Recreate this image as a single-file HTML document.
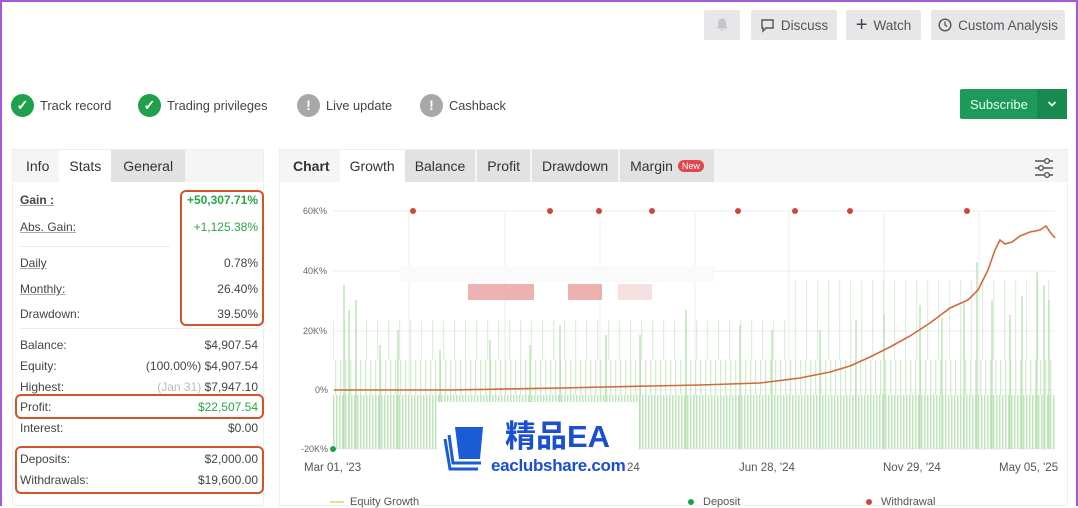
<!DOCTYPE html>
<html><head><meta charset="utf-8"><style>
*{box-sizing:border-box;margin:0;padding:0}
body{width:1078px;height:506px;overflow:hidden;background:#fff;font-family:"Liberation Sans",sans-serif;color:#333;position:relative}
.frame{position:absolute;left:0;top:0;width:1078px;height:506px;border:2px solid #a35ad8;border-bottom:none;pointer-events:none}
.btn{position:absolute;top:10px;height:30px;background:#e6e7e9;border-radius:2px;font-size:13.5px;color:#555;display:flex;align-items:center;justify-content:center;gap:6px}
.badge{position:absolute;top:92px;height:26px;display:flex;align-items:center;font-size:12.8px;color:#444;gap:6px}
.ic{width:23px;height:23px;border-radius:50%;display:flex;align-items:center;justify-content:center;color:#fff;font-weight:bold;font-size:14px}
.g{background:#1fa04a}.gr{background:#a8a8a8}
.panel{position:absolute;background:#fff;border:1px solid #eee}
.tabs{display:flex;height:32px;background:#f5f5f5;font-size:14px}
.tabs div{padding:0 10px;display:flex;align-items:center}
.row{position:absolute;left:20px;display:flex;justify-content:space-between;font-size:12px;color:#444}
.u{text-decoration:underline;text-decoration-color:#aaa}
.box{position:absolute;border:2.5px solid #d2552a;border-radius:6px}
.green{color:#28a745}
.ax{position:absolute;font-size:9px;color:#666}
.dl{position:absolute;top:462px;font-size:11.5px;color:#555}
</style></head><body>
<div class="btn" style="left:704px;width:36px"><svg width="16" height="16" viewBox="0 0 16 16"><path d="M8 1.5c-2.6 0-4 2-4 4.5v3.5l-1.5 2h11l-1.5-2V6c0-2.5-1.4-4.5-4-4.5zM6.5 12.5a1.5 1.5 0 003 0z" fill="#c6c6c8"/></svg></div>
<div class="btn" style="left:751px;width:86px"><svg width="15" height="15" viewBox="0 0 15 15"><path d="M2 2h11v8H6l-3 3v-3H2z" fill="none" stroke="#555" stroke-width="1.4"/></svg>Discuss</div>
<div class="btn" style="left:846px;width:75px"><span style="font-size:20px;color:#444">+</span>Watch</div>
<div class="btn" style="left:931px;width:134px"><svg width="14" height="14" viewBox="0 0 14 14"><circle cx="7" cy="7" r="5.8" fill="none" stroke="#555" stroke-width="1.4"/><path d="M7 3.5V7l2.2 1.5" fill="none" stroke="#555" stroke-width="1.3"/></svg>Custom Analysis</div>

<div class="badge" style="left:11px"><div class="ic g">✓</div>Track record</div>
<div class="badge" style="left:138px"><div class="ic g">✓</div>Trading privileges</div>
<div class="badge" style="left:297px"><div class="ic gr">!</div>Live update</div>
<div class="badge" style="left:420px"><div class="ic gr">!</div>Cashback</div>

<div style="position:absolute;left:960px;top:89px;width:107px;height:30px;background:#1d9a5a;border-radius:2px;color:#e8fff0;font-size:13px;display:flex;align-items:center"><span style="margin-left:10px">Subscribe</span><span style="position:absolute;right:0;top:0;width:30px;height:30px;background:#188a50;display:flex;align-items:center;justify-content:center"><svg width="10" height="8" viewBox="0 0 10 8"><path d="M1.5 2l3.5 3.5L8.5 2" fill="none" stroke="#e8fff0" stroke-width="1.8"/></svg></span></div>

<div class="panel" style="left:12px;top:149px;width:252px;height:357px">
<div class="tabs"><div style="padding-left:13px">Info</div><div style="background:#fff">Stats</div><div style="background:#e2e2e2;padding:0 12px">General</div></div>
</div>
<div class="row" style="top:193px;width:238px"><b class="u">Gain :</b><b class="green">+50,307.71%</b></div>
<div class="row" style="top:220px;width:238px"><span class="u">Abs. Gain:</span><span class="green">+1,125.38%</span></div>
<div style="position:absolute;left:20px;top:246px;width:150px;border-top:1px solid #eee"></div>
<div class="row" style="top:256px;width:238px"><span class="u">Daily</span><span>0.78%</span></div>
<div class="row" style="top:282px;width:238px"><span class="u">Monthly:</span><span>26.40%</span></div>
<div class="row" style="top:307px;width:238px"><span>Drawdown:</span><span>39.50%</span></div>
<div style="position:absolute;left:20px;top:328px;width:238px;border-top:1px solid #eee"></div>
<div class="row" style="top:338px;width:238px"><span>Balance:</span><span>$4,907.54</span></div>
<div class="row" style="top:359px;width:238px"><span>Equity:</span><span>(100.00%) $4,907.54</span></div>
<div class="row" style="top:380px;width:238px"><span>Highest:</span><span><span style="color:#bbb">(Jan 31)</span> $7,947.10</span></div>
<div class="row" style="top:400px;width:238px"><span>Profit:</span><span class="green">$22,507.54</span></div>
<div class="row" style="top:421px;width:238px"><span>Interest:</span><span>$0.00</span></div>
<div class="row" style="top:452px;width:238px"><span>Deposits:</span><span>$2,000.00</span></div>
<div class="row" style="top:473px;width:238px"><span>Withdrawals:</span><span>$19,600.00</span></div>
<div class="box" style="left:180px;top:190px;width:84px;height:136px"></div>
<div class="box" style="left:15px;top:394px;width:249px;height:25px"></div>
<div class="box" style="left:15px;top:446px;width:249px;height:48px"></div>

<div class="panel" style="left:279px;top:149px;width:789px;height:357px">
<div class="tabs" style="width:100%"><div style="padding-left:13px;font-weight:bold">Chart</div><div style="background:#fff">Growth</div><div style="background:#e2e2e2;margin-right:2px">Balance</div><div style="background:#e2e2e2;margin-right:2px">Profit</div><div style="background:#e2e2e2;margin-right:2px">Drawdown</div><div style="background:#e2e2e2">Margin <span style="background:#e0474f;color:#fff;font-size:9px;border-radius:7px;padding:1px 4px;margin-left:5px">New</span></div></div>
</div>
<svg style="position:absolute;left:1033px;top:157px" width="22" height="22" viewBox="0 0 22 22" fill="none" stroke="#555" stroke-width="1.4"><path d="M2 4h18M2 11h18M2 18h18"/><circle cx="14" cy="4" r="2.3" fill="#fff"/><circle cx="8" cy="11" r="2.3" fill="#fff"/><circle cx="14" cy="18" r="2.3" fill="#fff"/></svg>

<div class="ax" style="left:303px;top:206px">60K%</div>
<div class="ax" style="left:303px;top:266px">40K%</div>
<div class="ax" style="left:303px;top:326px">20K%</div>
<div class="ax" style="left:315px;top:385px">0%</div>
<div class="ax" style="left:301px;top:444px">-20K%</div>
<svg style="position:absolute;left:0;top:0" width="1078" height="506">
<defs>
<pattern id="p1" width="5" height="10" patternUnits="userSpaceOnUse"><rect width="1.3" height="10" fill="#b5e0b0"/></pattern>
<pattern id="p2" width="11" height="10" patternUnits="userSpaceOnUse"><rect x="3" width="1.2" height="10" fill="#b5e0b0"/></pattern>
<pattern id="p3" width="3" height="10" patternUnits="userSpaceOnUse"><rect width="1.5" height="10" fill="#bfe6bb"/></pattern>
</defs>
<g stroke="#eee" stroke-width="1"><line x1="333" y1="211" x2="1055" y2="211"/><line x1="333" y1="271" x2="1055" y2="271"/><line x1="333" y1="331" x2="1055" y2="331"/><line x1="333" y1="390" x2="1055" y2="390"/><line x1="333" y1="449" x2="1055" y2="449"/>
<line x1="409" y1="211" x2="409" y2="449"/><line x1="505" y1="211" x2="505" y2="449"/><line x1="600" y1="211" x2="600" y2="449"/><line x1="695" y1="211" x2="695" y2="449"/><line x1="789" y1="211" x2="789" y2="449"/><line x1="884" y1="211" x2="884" y2="449"/><line x1="979" y1="211" x2="979" y2="449"/></g>
<rect x="333" y="395" width="722" height="54" fill="url(#p3)"/>
<rect x="333" y="360" width="722" height="35" fill="url(#p1)" opacity="0.6"/>
<rect x="333" y="320" width="722" height="40" fill="url(#p2)" opacity="0.5"/>
<rect x="790" y="280" width="265" height="40" fill="url(#p2)" opacity="0.45"/>
<g stroke="#b5e0b0" stroke-width="1.3">
<line x1="344" y1="449" x2="344" y2="285"/><line x1="349" y1="449" x2="349" y2="310"/><line x1="356" y1="449" x2="356" y2="300"/><line x1="380" y1="449" x2="380" y2="345"/><line x1="398" y1="449" x2="398" y2="330"/><line x1="440" y1="449" x2="440" y2="350"/><line x1="490" y1="449" x2="490" y2="340"/><line x1="530" y1="449" x2="530" y2="345"/><line x1="560" y1="449" x2="560" y2="325"/><line x1="606" y1="449" x2="606" y2="335"/><line x1="640" y1="449" x2="640" y2="335"/><line x1="686" y1="449" x2="686" y2="310"/><line x1="740" y1="449" x2="740" y2="325"/><line x1="772" y1="449" x2="772" y2="330"/><line x1="820" y1="449" x2="820" y2="330"/><line x1="856" y1="449" x2="856" y2="320"/><line x1="884" y1="449" x2="884" y2="315"/><line x1="920" y1="449" x2="920" y2="305"/><line x1="942" y1="449" x2="942" y2="318"/><line x1="964" y1="449" x2="964" y2="303"/><line x1="977" y1="449" x2="977" y2="262"/><line x1="992" y1="449" x2="992" y2="300"/><line x1="1010" y1="449" x2="1010" y2="315"/><line x1="1022" y1="449" x2="1022" y2="296"/><line x1="1037" y1="449" x2="1037" y2="272"/><line x1="1044" y1="449" x2="1044" y2="285"/><line x1="1049" y1="449" x2="1049" y2="300"/>
</g>
<polyline fill="none" stroke="#d2693a" stroke-width="1.6" points="334,390 450,390 560,388 650,386 700,385 760,383 800,378 830,372 850,366 870,357 890,347 910,336 930,323 950,308 968,300 978,290 988,270 995,250 1000,240 1005,244 1012,242 1020,236 1030,232 1040,230 1046,226 1050,232 1055,238"/>
<g fill="#d0463e"><circle cx="413" cy="211" r="3"/><circle cx="550" cy="211" r="3"/><circle cx="599" cy="211" r="3"/><circle cx="652" cy="211" r="3"/><circle cx="738" cy="211" r="3"/><circle cx="795" cy="211" r="3"/><circle cx="850" cy="211" r="3"/><circle cx="967" cy="211" r="3"/></g>
<circle cx="333" cy="449" r="3" fill="#1fa04a"/>
<rect x="400" y="266" width="315" height="16" fill="#fafafa"/>
<g fill="#e8a0a0" opacity="0.8"><rect x="468" y="284" width="66" height="16"/><rect x="568" y="284" width="34" height="16"/><rect x="618" y="284" width="34" height="16" opacity="0.4"/></g>
<line x1="330" y1="502" x2="344" y2="502" stroke="#e6e090" stroke-width="2"/>
<circle cx="691" cy="502" r="3" fill="#1fa04a"/><circle cx="869" cy="502" r="3" fill="#d0463e"/>
</svg>
<div class="dl" style="left:304px">Mar 01, '23</div>
<div class="dl" style="left:739px">Jun 28, '24</div>
<div class="dl" style="left:883px">Nov 29, '24</div>
<div class="dl" style="left:999px">May 05, '25</div>
<div style="position:absolute;left:350px;top:496px;font-size:11px;color:#555">Equity Growth</div>
<div style="position:absolute;left:703px;top:496px;font-size:11px;color:#555">Deposit</div>
<div style="position:absolute;left:881px;top:496px;font-size:11px;color:#555">Withdrawal</div>

<div style="position:absolute;left:438px;top:402px;width:200px;height:86px;background:#fff"></div>
<svg style="position:absolute;left:443px;top:425px" width="46" height="48" viewBox="0 0 46 48"><path d="M2 14l5 30h28" fill="none" stroke="#1a5bd6" stroke-width="3"/><path d="M6 10l4 28h28" fill="none" stroke="#1a5bd6" stroke-width="3"/><path d="M12 2h28l-3 32H16z" fill="#1a5bd6"/></svg>
<div style="position:absolute;left:505px;top:420px;font-size:31px;font-weight:bold;color:#1a4fd0;font-family:'Liberation Sans','Noto Sans CJK SC',sans-serif;line-height:34px">精品EA</div>
<div style="position:absolute;left:491px;top:456px;font-size:17px;font-weight:bold;color:#1a4fd0;letter-spacing:-0.3px">eaclubshare.com</div>
<div style="position:absolute;left:627px;top:462px;font-size:11.5px;color:#555">24</div>
<div class="frame"></div>
</body></html>
